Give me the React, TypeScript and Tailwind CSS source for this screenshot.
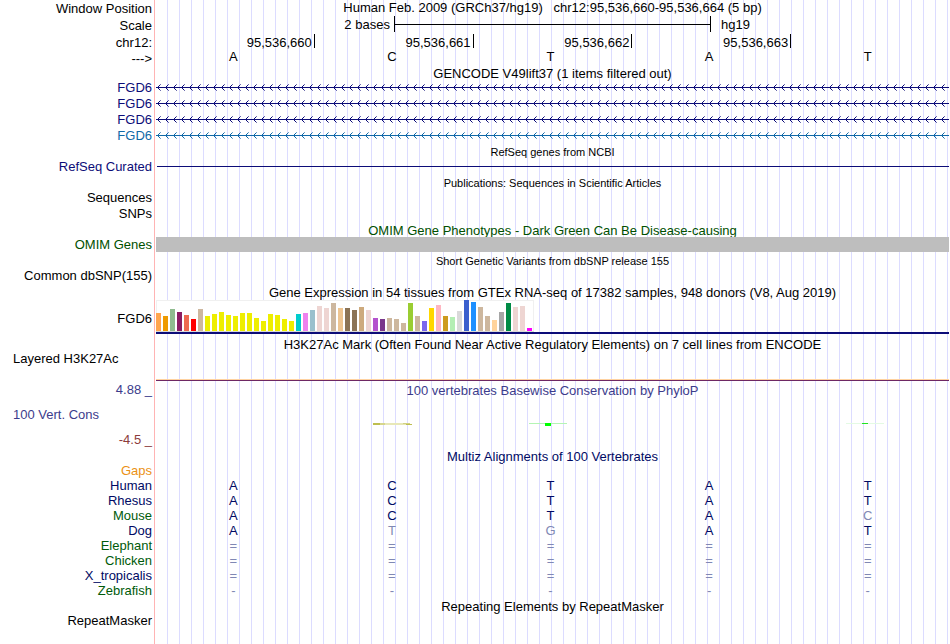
import type { ReactNode } from 'react';

const bars: [number, string][] = [
  [18, '#ffa54f'], [15, '#ee9a00'], [22, '#8fbc8f'], [19, '#8b1c62'], [16, '#ee6a50'], [12, '#ff0000'],
  [22, '#cdb79e'], [15, '#eeee00'], [17, '#eeee00'], [19, '#eeee00'], [16, '#eeee00'], [15, '#eeee00'],
  [18, '#eeee00'], [18, '#eeee00'], [13, '#eeee00'], [10, '#eeee00'], [17, '#eeee00'], [16, '#eeee00'],
  [12, '#eeee00'], [10, '#eeee00'], [17, '#00cdcd'], [18, '#ee82ee'], [21, '#9ac0cd'], [25, '#eed5d2'],
  [23, '#eed5d2'], [28, '#cdb79e'], [23, '#eec591'], [23, '#8b7355'], [21, '#8b7355'], [24, '#cdaa7d'],
  [21, '#eed5d2'], [13, '#b452cd'], [12, '#7a378b'], [13, '#cdb79e'], [12, '#cdb79e'], [8, '#cdb79e'],
  [28, '#9acd32'], [15, '#cdb79e'], [10, '#7a67ee'], [23, '#ffd700'], [26, '#ffb6c1'], [15, '#cd9b1d'],
  [14, '#b4eeb4'], [20, '#d9d9d9'], [31, '#3a5fcd'], [29, '#1e90ff'], [24, '#cdb79e'], [15, '#cdb79e'],
  [11, '#ffd39b'], [19, '#a6a6a6'], [28, '#008b45'], [24, '#eed5d2'], [25, '#eed5d2'], [3, '#ff00ff'],
];

const species = [
  { name: 'Human', bases: 'ACTAT', green: false },
  { name: 'Rhesus', bases: 'ACTAT', green: false },
  { name: 'Mouse', bases: 'ACTAC', green: true },
  { name: 'Dog', bases: 'ATGAT', green: false },
  { name: 'Elephant', bases: '=====', green: true },
  { name: 'Chicken', bases: '=====', green: true },
  { name: 'X_tropicalis', bases: '=====', green: false },
  { name: 'Zebrafish', bases: '-----', green: true },
];

type RowProps = {
  label?: ReactNode;
  height: string;
  labelClass?: string;
  trackClass?: string;
  children?: ReactNode;
};

function Row({ label, height, labelClass = '', trackClass = '', children }: RowProps) {
  return (
    <div className={`flex ${height}`}>
      <div className={`w-[154px] shrink-0 whitespace-nowrap pr-0.5 text-right ${labelClass}`}>{label}</div>
      <div
        className={`min-w-0 flex-1 border-l border-[#ffb4b4] bg-[repeating-linear-gradient(to_right,transparent_0px,transparent_11px,#dcdcff_11px,#dcdcff_12px)] bg-[position:1px_0] bg-no-repeat px-px ${trackClass}`}
      >
        {children}
      </div>
    </div>
  );
}

function Title({ height, className = '', children }: { height: string; className?: string; children: ReactNode }) {
  return (
    <Row height={height} trackClass={`text-center whitespace-pre ${className}`}>
      {children}
    </Row>
  );
}

function Bases({ bases, reference }: { bases: string; reference: string }) {
  return (
    <div className="grid grid-cols-5 text-center">
      {bases.split('').map((base, i) => (
        <span key={i} className={base === reference[i] ? 'pr-1' : 'pr-1 text-[#8088b4]'}>
          {base}
        </span>
      ))}
    </div>
  );
}

function GeneLine({ id, color }: { id: string; color: string }) {
  return (
    <svg className="block h-4 w-full" fill={color} shapeRendering="crispEdges">
      <defs>
        <pattern id={id} width="8" height="16" patternUnits="userSpaceOnUse">
          <path d="M1 7h1v1h-1zM2 6h1v1h-1zM2 8h1v1h-1zM3 5h1v1h-1zM3 9h1v1h-1z" />
          <path d="M4 4h1v1h-1zM4 10h1v1h-1z" fillOpacity="0.6" />
        </pattern>
      </defs>
      <rect width="100%" height="16" fill={`url(#${id})`} />
      <rect y="7" width="100%" height="1" />
    </svg>
  );
}

function Expression() {
  return (
    <svg className="block h-[34px] w-full" shapeRendering="crispEdges">
      <rect width="378" height="32" fill="#f0f0f0" />
      <rect y="1" x="1" width="376" height="30" fill="#ffffff" />
      <rect y="31" width="378" height="1" fill="#d8d8d8" />
      {bars.map(([h, color], i) => (
        <rect key={i} x={i * 7} y={31 - h} width="5" height={h} fill={color} />
      ))}
      <rect y="32" width="100%" height="2" fill="#0c0c78" />
    </svg>
  );
}

function Conservation() {
  return (
    <svg className="block h-[51px] w-full" viewBox="0 0 793 51" preserveAspectRatio="none" shapeRendering="crispEdges">
      <rect x="217" y="25" width="37" height="2" fill="#e8e8b8" />
      <rect x="217" y="25" width="7" height="2" fill="#bebe50" />
      <rect x="224" y="25" width="5" height="2" fill="#d6d68c" />
      <rect x="247" y="25" width="7" height="1" fill="#d2d282" />
      <rect x="250" y="26" width="6" height="1" fill="#bebe50" />
      <rect x="373" y="25" width="38" height="1" fill="#b4f5b4" />
      <rect x="389" y="25" width="6" height="3" fill="#00ff00" />
      <rect x="690" y="25" width="38" height="1" fill="#e4fae4" />
      <rect x="706" y="25" width="6" height="1" fill="#1ee61e" />
    </svg>
  );
}

export default function App() {
  const genes = ['#0c0c78', '#0c0c78', '#0c0c78', '#1069a7'];

  return (
    <main className="flex min-h-screen flex-col overflow-x-hidden bg-white font-['Liberation_Sans',Arial,sans-serif] text-[13px] leading-[15px] text-black">
      <Row label="Window Position" height="h-4" labelClass="pt-px" trackClass="text-center whitespace-pre">
        {'Human Feb. 2009 (GRCh37/hg19)   chr12:95,536,660-95,536,664 (5 bp)'}
      </Row>
      <Row label="Scale" height="h-[17px]" labelClass="pt-0.5" trackClass="flex">
        <span className="w-[30%] pr-1 pt-px text-right">2 bases</span>
        <span className="flex h-4 w-[40%] items-center border-x border-black pt-px">
          <span className="h-px w-full bg-black" />
        </span>
        <span className="pl-2.5 pt-px">hg19</span>
      </Row>
      <Row label="chr12:" height="h-4" labelClass="pt-0.5" trackClass="pr-0 pt-px">
        <div className="grid h-[14px] grid-cols-5 text-right">
          {['95,536,660', '95,536,661', '95,536,662', '95,536,663'].map((pos) => (
            <span key={pos} className="h-[14px] border-r border-black pr-0.5 pt-px">
              {pos}
            </span>
          ))}
        </div>
      </Row>
      <Row label="--->" height="h-[17px]" labelClass="pt-0.5">
        <Bases bases="ACTAT" reference="ACTAT" />
      </Row>

      <Title height="h-[14px]">GENCODE V49lift37 (1 items filtered out)</Title>
      {genes.map((color, i) => (
        <Row
          key={i}
          label="FGD6"
          height="h-4"
          labelClass={i === 3 ? 'text-[#1069a7]' : 'text-[#0c0c78]'}
        >
          <GeneLine id={`gene-${i}`} color={color} />
        </Row>
      ))}

      <Title height="h-[15px]" className="pt-px text-[11px]">RefSeq genes from NCBI</Title>
      <Row label="RefSeq Curated" height="h-4" labelClass="text-[#0c0c78]" trackClass="pl-0.5 pt-[7px]">
        <div className="h-px bg-[#0c0c78]" />
      </Row>
      <Title height="h-[15px]" className="pt-px text-[11px]">Publications: Sequences in Scientific Articles</Title>
      <Row label="Sequences" height="h-4" />
      <Row label="SNPs" height="h-4" />
      <Title height="h-[15px]" className="pt-px text-[#005000]">OMIM Gene Phenotypes - Dark Green Can Be Disease-causing</Title>
      <Row label="OMIM Genes" height="h-[15px]" labelClass="text-[#005000]">
        <div className="h-full bg-[#bebebe]" />
      </Row>
      <Title height="h-4" className="pt-0.5 text-[11px]">Short Genetic Variants from dbSNP release 155</Title>
      <Row label="Common dbSNP(155)" height="h-4" />
      <Title height="h-4" className="pt-px">
        Gene Expression in 54 tissues from GTEx RNA-seq of 17382 samples, 948 donors (V8, Aug 2019)
      </Title>
      <Row label="FGD6" height="h-[34px]" labelClass="pt-[11px]">
        <Expression />
      </Row>

      <Title height="h-[17px]" className="pt-[3px]">
        H3K27Ac Mark (Often Found Near Active Regulatory Elements) on 7 cell lines from ENCODE
      </Title>
      <Row
        label={<div className="pl-[13px] text-left">Layered H3K27Ac</div>}
        height="h-[30px]"
        trackClass="flex items-end"
      >
        <div className="h-0.5 w-full border-t border-[#ffd2a0] bg-[#6e2864]" />
      </Row>

      <Row label="4.88 _" height="h-[17px]" labelClass="pt-px text-[#3c3c8c]" trackClass="pt-0.5 text-center text-[#3c3c8c]">
        100 vertebrates Basewise Conservation by PhyloP
      </Row>
      <Row
        label={
          <>
            <div className="pl-[13px] text-left text-[#3c3c8c]">100 Vert. Cons</div>
            <div className="text-[#8c3c3c]">-4.5 _</div>
          </>
        }
        height="h-[51px]"
        labelClass="flex flex-col gap-2.5 pt-[9px]"
      >
        <Conservation />
      </Row>

      <Title height="h-[14px]" className="text-[#000a64]">Multiz Alignments of 100 Vertebrates</Title>
      <Row label="Gaps" height="h-[15px]" labelClass="text-[#eb9114]" />
      {species.map((s) => (
        <Row
          key={s.name}
          label={s.name}
          height="h-[15px]"
          labelClass={s.green ? 'text-[#005a0a]' : 'text-[#000a64]'}
          trackClass="text-[#000a64]"
        >
          <Bases bases={s.bases} reference="ACTAT" />
        </Row>
      ))}
      <Title height="h-[15px]" className="pt-px">Repeating Elements by RepeatMasker</Title>
      <Row label="RepeatMasker" height="min-h-4 flex-1" />
    </main>
  );
}
